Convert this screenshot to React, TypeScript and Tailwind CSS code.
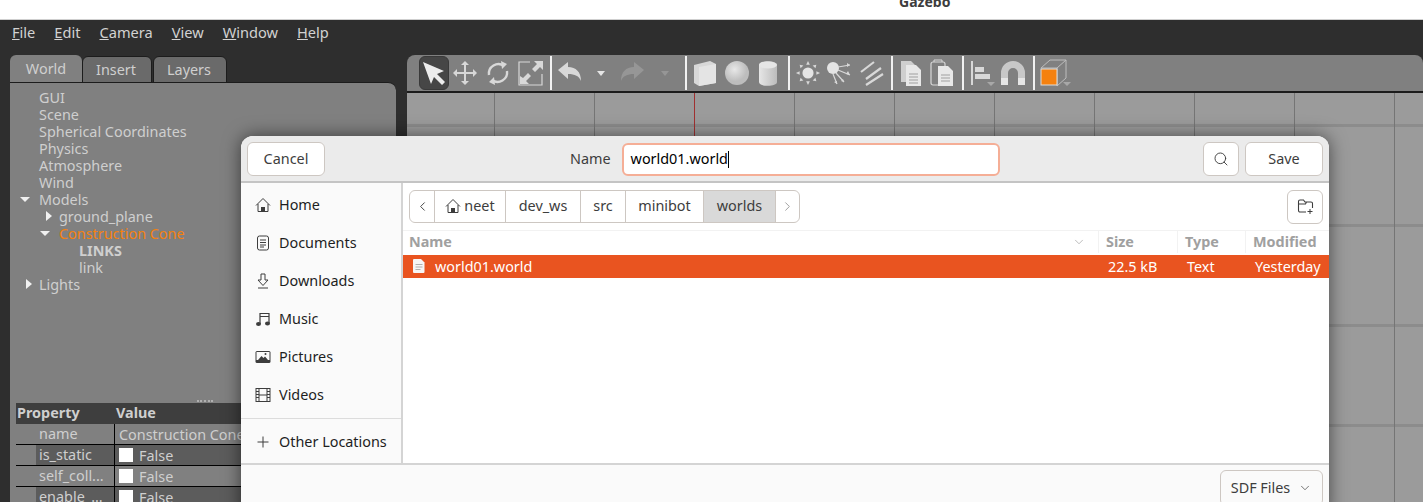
import React from 'react';
import { ChevronLeft, ChevronRight, ChevronDown, Search } from 'lucide-react';

const Sep = ({ w }: { w: string }) => (
  <div className={`${w} h-[34px] flex justify-center shrink-0`}>
    <div className="w-[2px] h-full bg-[#f2f2f2]" />
  </div>
);

const Drop = ({ w, dim }: { w: string; dim?: boolean }) => (
  <div className={`${w} flex justify-center shrink-0`}>
    <div className={`w-0 h-0 border-x-[4px] border-x-transparent border-t-[5px] ${dim ? 'border-t-[#969696]' : 'border-t-[#e6e6e6]'}`} />
  </div>
);

const Icon = ({ w, children }: { w: string; children: React.ReactNode }) => (
  <div className={`${w} h-[34px] flex items-center justify-center shrink-0`}>
    <svg width="28" height="28" viewBox="0 0 28 28">{children}</svg>
  </div>
);

const g = '#d8d8d8';

function Toolbar() {
  return (
    <div className="h-[38px] bg-[#808080] rounded-t-lg border-b-2 border-[#1c1c1c] flex items-center pl-3 shrink-0">
      <div className="w-[30px] h-[34px] rounded-md bg-[#464646] border border-[#3a3a3a] flex items-center justify-center shrink-0">
        <svg width="26" height="26" viewBox="0 0 26 26"><path d="M2 2 L23 11 L16 14 L24 22 L21 25 L13 17 L10 24 Z" fill="#ececec" /></svg>
      </div>
      <Icon w="w-[32px]"><path d="M14 2l4 4h-3v7h7v-3l4 4-4 4v-3h-7v7h3l-4 4-4-4h3v-7H6v3l-4-4 4-4v3h7V6h-3z" fill={g} /></Icon>
      <Icon w="w-[34px]"><path d="M5 16a9.5 9.5 0 0 1 15-9M23 12a9.5 9.5 0 0 1-15 9" stroke={g} strokeWidth="2.4" fill="none" /><path d="M17 2l6 3-5 5zM11 26l-6-3 5-5z" fill={g} /></Icon>
      <Icon w="w-[32px]"><path d="M13 3H2v23h23V15" stroke={g} strokeWidth="1.2" fill="none" /><path d="M17 2h9v9l-3-3-5 5-3-3 5-5zM3 17v8h9l-3-3 5-5-3-3-5 5z" fill={g} /></Icon>
      <Sep w="w-[8px]" />
      <Icon w="w-[30px]"><path d="M2 11l10-8v5c8 0 13 5 13 14-2-5-6-7-13-7v5z" fill={g} /></Icon>
      <Drop w="w-[32px]" />
      <Icon w="w-[30px]"><path d="M26 11L16 3v5C8 8 3 13 3 22c2-5 6-7 13-7v5z" fill="#969696" /></Icon>
      <Drop w="w-[36px]" dim />
      <Sep w="w-[6px]" />
      <Icon w="w-[32px]"><path d="M3 6l16-4 6 3v19l-17 3-5-3z" fill={g} /><path d="M8 8v19l17-3V5z" fill="#e4e4e4" /></Icon>
      <Icon w="w-[32px]"><circle cx="14" cy="14" r="12" fill="url(#sph)" /><defs><radialGradient id="sph" cx="0.4" cy="0.35"><stop offset="0" stopColor="#e8e8e8" /><stop offset="1" stopColor="#bdbdbd" /></radialGradient></defs></Icon>
      <Icon w="w-[30px]"><path d="M5 6c0-5 18-5 18 0v17c0 5-18 5-18 0z" fill="url(#cyl)" /><ellipse cx="14" cy="6" rx="9" ry="3.5" fill="#e6e6e6" /><defs><linearGradient id="cyl"><stop offset="0" stopColor="#e6e6e6" /><stop offset="1" stopColor="#bcbcbc" /></linearGradient></defs></Icon>
      <Sep w="w-[12px]" />
      <Icon w="w-[26px]"><circle cx="14" cy="14" r="6" fill="#e4e4e4" /><path d="M14 1l2 4h-4zM14 27l2-4h-4zM1 14l4 2v-4zM27 14l-4 2v-4zM5 5l4 1-3 3zM23 5l-4 1 3 3zM5 23l4-1-3-3zM23 23l-4-1 3-3z" fill={g} /></Icon>
      <Icon w="w-[34px]"><circle cx="9" cy="9" r="6" fill="#e4e4e4" /><path d="M14 8l12-2M14 11l12 5M12 14l8 9M9 15l4 10" stroke={g} strokeWidth="1.2" /><path d="M26 6l-3-2v4zM26 16l-4-1 2-3zM20 23l-3-1 2-2zM13 25l-3-2 3-1z" fill={g} /></Icon>
      <Icon w="w-[32px]"><path d="M4 13L17 3M9 20L24 9M9 26L26 15" stroke={g} strokeWidth="2.2" /></Icon>
      <Sep w="w-[10px]" />
      <Icon w="w-[28px]"><path d="M4 2h10l4 4v17H4z" fill="#cfcfcf" /><path d="M9 6h10l5 5v16H9z" fill="#e8e8e8" /><path d="M12 15h9M12 18h9M12 21h9M12 24h9" stroke="#a0a0a0" /></Icon>
      <Icon w="w-[32px]"><rect x="4" y="3" width="14" height="23" rx="2" stroke={g} strokeWidth="1.2" fill="none" /><path d="M7 3V1h8v2" stroke={g} fill="none" /><path d="M11 7h10l5 5v15H11z" fill="#e8e8e8" /><path d="M14 16h9M14 19h9M14 22h9" stroke="#a0a0a0" /></Icon>
      <Sep w="w-[12px]" />
      <div className="w-[24px] h-[34px] relative shrink-0">
        <svg width="28" height="28" viewBox="0 0 28 28" className="absolute left-0 top-[3px]"><path d="M2 2h2v24H2z" fill={g} /><path d="M6 8h9v5H6zM6 15h15v5H6z" fill={g} /><path d="M18 23h8l-4 4z" fill="#a8a8a8" /></svg>
      </div>
      <Icon w="w-[40px]"><path d="M2 26V14a12 12 0 0 1 24 0v12h-7V14a5 5 0 0 0-10 0v12z" fill="#c8c8c8" /><path d="M2 26v-7h7v7zM19 26v-7h7v7z" fill="#e6e6e6" /></Icon>
      <Sep w="w-[2px]" />
      <div className="w-[34px] h-[34px] relative shrink-0">
        <svg width="34" height="32" viewBox="0 0 34 32" className="absolute left-[2px] top-[2px]">
          <path d="M4 10l9-8h16v18l-9 8M4 10h16v18M20 10l9-8" stroke="#bdbdbd" fill="none" />
          <rect x="4" y="11" width="16" height="16" fill="#f5810f" stroke="#dcdcdc" />
          <path d="M26 24h8l-4 4z" fill="#a8a8a8" />
        </svg>
      </div>
    </div>
  );
}

const TreeRow = ({ pad, caret, className, children }: { pad: string; caret?: 'open' | 'closed'; className?: string; children: React.ReactNode }) => (
  <div className={`h-[17px] leading-[17px] relative ${pad} ${className ?? ''}`}>
    {caret === 'open' && (
      <span className="absolute top-[6px] -ml-[19px] w-0 h-0 border-x-[5px] border-x-transparent border-t-[5px] border-t-[#f0f0f0]" />
    )}
    {caret === 'closed' && (
      <span className="absolute top-[3px] -ml-[13px] w-0 h-0 border-y-[5px] border-y-transparent border-l-[6px] border-l-[#f0f0f0]" />
    )}
    {children}
  </div>
);

const Check = () => <span className="inline-block w-[14px] h-[14px] bg-white shrink-0" />;

const PropRow = ({ name, dark, children }: { name: string; dark?: boolean; children: React.ReactNode }) => (
  <div className="flex h-[21px] border-b border-black leading-[19px]">
    <div className="w-[20px] shrink-0 bg-[#808080]" />
    <div className={`w-[79px] pl-[3px] shrink-0 border-r border-black truncate ${dark ? 'bg-[#5c5c5c]' : ''}`}>{name}</div>
    <div className={`flex-1 pl-[4px] flex items-center gap-[6px] whitespace-nowrap overflow-hidden ${dark ? 'bg-[#5c5c5c]' : ''}`}>{children}</div>
  </div>
);

function LeftPanel() {
  return (
    <div className="w-[386px] ml-[10px] shrink-0 flex flex-col text-[14.4px] text-[#cfcfcf]">
      <div className="flex h-[28px] items-end">
        <div className="w-[72px] h-[28px] bg-[#808080] rounded-t-md flex items-center justify-center">World</div>
        <div className="w-[70px] h-[27px] pr-[2px] bg-[#6a6a6a] border border-[#1c1c1c] rounded-t-md flex items-center justify-center">Insert</div>
        <div className="w-[74px] h-[27px] pr-[2px] ml-px bg-[#6a6a6a] border border-[#1c1c1c] rounded-t-md flex items-center justify-center">Layers</div>
      </div>
      <div className="flex-1 bg-[#808080] rounded-tr-lg border-t border-[#1c1c1c] -mt-px relative flex flex-col">
        <div className="pt-[6px]">
          <TreeRow pad="pl-[29px]">GUI</TreeRow>
          <TreeRow pad="pl-[29px]">Scene</TreeRow>
          <TreeRow pad="pl-[29px]">Spherical Coordinates</TreeRow>
          <TreeRow pad="pl-[29px]">Physics</TreeRow>
          <TreeRow pad="pl-[29px]">Atmosphere</TreeRow>
          <TreeRow pad="pl-[29px]">Wind</TreeRow>
          <TreeRow pad="pl-[29px]" caret="open">Models</TreeRow>
          <TreeRow pad="pl-[49px]" caret="closed">ground_plane</TreeRow>
          <TreeRow pad="pl-[49px]" caret="open" className="text-[#f5810f]">Construction Cone</TreeRow>
          <TreeRow pad="pl-[69px]" className="font-bold">LINKS</TreeRow>
          <TreeRow pad="pl-[69px]">link</TreeRow>
          <TreeRow pad="pl-[29px]" caret="closed">Lights</TreeRow>
        </div>
        <div className="mt-[99px] h-[11px] flex items-end pl-[187px] pb-px">
          <div className="w-[16px] border-t-2 border-dotted border-[#b0b0b0]" />
        </div>
        <div className="ml-[6px] mr-[10px]">
          <div className="flex h-[21px] bg-[#3e3e3e] font-bold items-center leading-none">
            <div className="w-[100px] pl-px">Property</div>
            <div className="pl-0">Value</div>
          </div>
          <PropRow name="name">Construction Cone</PropRow>
          <PropRow name="is_static" dark><Check />False</PropRow>
          <PropRow name="self_coll..."><Check />False</PropRow>
          <PropRow name="enable_..." dark><Check />False</PropRow>
        </div>
      </div>
    </div>
  );
}

const Place = ({ icon, label }: { icon: React.ReactNode; label: string }) => (
  <div className="h-[38px] shrink-0 flex items-center pl-[14px] gap-[8px]">
    <svg width="16" height="16" viewBox="0 0 16 16" className="shrink-0">{icon}</svg>
    <span>{label}</span>
  </div>
);

const Crumb = ({ w, children, active }: { w: string; children: React.ReactNode; active?: boolean }) => (
  <div className={`${w} h-full pb-px flex items-center justify-center gap-[3px] border-l border-[#cdc7c2] ${active ? 'bg-[#d9d9d9]' : ''}`}>{children}</div>
);

const c = '#3d3d3d';

const HomeGlyph = (
  <>
    <path d="M1 8.5L8 1.5l7 7M3 7v7.5h10V7" stroke={c} strokeWidth="1" fill="none" />
    <path d="M6 10h4v4.5H6z" fill={c} />
  </>
);

function Dialog() {
  return (
    <div className="absolute left-[241px] top-[136px] w-[1088px] h-[380px] bg-white rounded-t-xl shadow-[0_0_18px_rgba(0,0,0,0.55)] flex flex-col text-[14.4px] text-[#3d3d3d] overflow-hidden">
      <div className="h-[47px] shrink-0 bg-[#ebebeb] border-b-2 border-[#c4c4c4] flex items-center px-[6px] relative">
        <button className="w-[78px] h-[34px] bg-white border border-[#cdc7c2] rounded-md">Cancel</button>
        <div className="absolute left-[329px] top-[6px] h-[34px] flex items-center gap-[11px]">
          <span>Name</span>
          <div className="w-[378px] h-[33px] bg-white border-2 border-[#f5ae96] rounded-md flex items-center pl-[7px] text-black">
            world01.world<span className="w-px h-[17px] bg-black" />
          </div>
        </div>
        <div className="ml-auto flex gap-[6px]">
          <button className="w-[36px] h-[34px] bg-white border border-[#cdc7c2] rounded-md flex items-center justify-center"><Search size={16} strokeWidth={1.4} /></button>
          <button className="w-[78px] h-[34px] bg-white border border-[#cdc7c2] rounded-md">Save</button>
        </div>
      </div>
      <div className="flex-1 flex min-h-0">
        <div className="w-[162px] shrink-0 bg-[#fafafa] border-r-2 border-[#d4d4d4] text-[#1e1e1e] flex flex-col pt-[3px]">
          <Place label="Home" icon={HomeGlyph} />
          <Place label="Documents" icon={<><rect x="2.5" y="1" width="11" height="14" rx="2" stroke={c} fill="none" /><path d="M5 5h6M5 7.5h6M5 10h6M5 12h4" stroke={c} /></>} />
          <Place label="Downloads" icon={<path d="M6 1h4v6h3l-5 5.5L3 7h3zM3 15h10" stroke={c} fill="none" />} />
          <Place label="Music" icon={<><path d="M5 13V2.5h9V12M5 5.5h9" stroke={c} strokeWidth="1.2" fill="none" /><ellipse cx="3.5" cy="13" rx="2.5" ry="2" fill={c} /><ellipse cx="12.5" cy="12.5" rx="2.5" ry="2" fill={c} /></>} />
          <Place label="Pictures" icon={<><rect x="0.5" y="2" width="15" height="12" rx="1.5" fill={c} /><rect x="1.5" y="3" width="13" height="8" fill="#fafafa" /><path d="M3 11l3.5-4 2 2 1.5-1.5 3 3.5z" fill={c} /><circle cx="10.5" cy="5" r="1" fill={c} /></>} />
          <Place label="Videos" icon={<><rect x="1" y="1.5" width="14" height="13" stroke={c} fill="none" /><path d="M4 1.5v13M12 1.5v13M4 8h8M1 4.5h3M1 7.5h3M1 10.5h3M12 4.5h3M12 7.5h3M12 10.5h3" stroke={c} /></>} />
          <div className="border-t border-[#dcdcdc] mt-[4px]" />
          <div className="h-[44px] pt-[2px] shrink-0 flex items-center pl-[14px] gap-[8px]">
            <svg width="16" height="16" viewBox="0 0 16 16" className="shrink-0"><path d="M8 2.5v11M2.5 8h11" stroke={c} /></svg>
            <span>Other Locations</span>
          </div>
        </div>
        <div className="flex-1 flex flex-col min-w-0">
          <div className="h-[47px] shrink-0 flex items-center pl-[6px] pr-[6px] justify-between">
            <div className="h-[33px] flex items-center border border-[#cdc7c2] rounded-md overflow-hidden">
              <div className="w-[24px] h-full flex items-center justify-center"><ChevronLeft size={15} strokeWidth={1.5} /></div>
              <Crumb w="w-[71px]"><svg width="16" height="16" viewBox="0 0 16 16">{HomeGlyph}</svg>neet</Crumb>
              <Crumb w="w-[75px]">dev_ws</Crumb>
              <Crumb w="w-[45px]">src</Crumb>
              <Crumb w="w-[78px]">minibot</Crumb>
              <Crumb w="w-[72px]" active>worlds</Crumb>
              <div className="w-[24px] h-full border-l border-[#cdc7c2] flex items-center justify-center text-[#9a9a9a]"><ChevronRight size={15} strokeWidth={1.5} /></div>
            </div>
            <button className="w-[36px] h-[34px] border border-[#cdc7c2] rounded-md flex items-center justify-center">
              <svg width="17" height="17" viewBox="0 0 17 17"><path d="M9 14H3a1.5 1.5 0 0 1-1.5-1.5v-9A1.5 1.5 0 0 1 3 2h3.5l1.5 2h6a1.5 1.5 0 0 1 1.5 1.5V10M1.5 6h7l1-2" stroke={c} strokeWidth="1.1" fill="none" /><path d="M13 11v5M10.5 13.5h5" stroke={c} /></svg>
            </button>
          </div>
          <div className="h-[25px] pb-[2px] shrink-0 border-t border-[#f2f2f2] flex items-center font-bold text-[#a0a0a0]">
            <div className="w-[696px] h-full pl-[6px] pr-[12px] flex items-center justify-between border-r border-[#f2f2f2]">Name<ChevronDown size={14} strokeWidth={1.2} /></div>
            <div className="w-[79px] h-full pl-[7px] flex items-center border-r border-[#f2f2f2]">Size</div>
            <div className="w-[68px] h-full pl-[7px] flex items-center border-r border-[#f2f2f2]">Type</div>
            <div className="pl-[7px]">Modified</div>
          </div>
          <div className="h-[23px] shrink-0 bg-[#e95420] text-white flex items-center">
            <div className="w-[696px] pl-[8px] flex items-center gap-[8px]">
              <svg width="16" height="16" viewBox="0 0 16 16"><path d="M3 1h7l3.5 3.5V14a1 1 0 0 1-1 1H3a1 1 0 0 1-1-1V2a1 1 0 0 1 1-1z" fill="#f6f6f6" /><path d="M4.5 6.5h7M4.5 9h7M4.5 11.5h5" stroke="#b0b0b0" /></svg>
              world01.world
            </div>
            <div className="w-[79px] pl-[9px]">22.5 kB</div>
            <div className="w-[68px] pl-[9px]">Text</div>
            <div className="pl-[9px]">Yesterday</div>
          </div>
          <div className="flex-1" />
        </div>
      </div>
      <div className="h-[53px] shrink-0 bg-[#fafafa] border-t-2 border-[#d4d4d4] flex justify-end pt-[5px] pr-[6px]">
        <button className="w-[103px] h-[36px] border border-[#cdc7c2] rounded-md flex items-center justify-center gap-[8px]">SDF Files<ChevronDown size={14} strokeWidth={1.2} /></button>
      </div>
    </div>
  );
}

export default function App() {
  return (
    <div className="relative h-[502px] w-[1423px] overflow-hidden bg-[#2e2e2e] flex flex-col font-['Noto_Sans',sans-serif]">
      <div className="h-[20px] bg-white shrink-0 border-b border-[#cfcfcf] overflow-hidden relative">
        <div className="absolute left-[899px] -top-[9px] font-bold text-[14px] text-[#3d3d3d]">Gazebo</div>
      </div>
      <div className="h-[35px] shrink-0 flex items-start pt-[2px] gap-[19px] pl-[12px] text-[14.6px] text-[#d2d2d2]">
        <span><u>F</u>ile</span>
        <span><u>E</u>dit</span>
        <span><u>C</u>amera</span>
        <span><u>V</u>iew</span>
        <span><u>W</u>indow</span>
        <span><u>H</u>elp</span>
      </div>
      <div className="flex-1 flex min-h-0">
        <LeftPanel />
        <div className="flex-1 ml-[11px] flex flex-col min-w-0">
          <Toolbar />
          <div className="flex-1 bg-[#9b9b9b] bg-[linear-gradient(to_right,#757575_1px,transparent_1px),linear-gradient(to_bottom,#8c8c8c_3px,transparent_3px)] bg-[length:100px_100%,100%_100px] bg-[position:87px_0,0_31px]">
            <div className="w-px h-[60px] bg-[#a03030] ml-[287px]" />
          </div>
        </div>
      </div>
      <Dialog />
    </div>
  );
}
